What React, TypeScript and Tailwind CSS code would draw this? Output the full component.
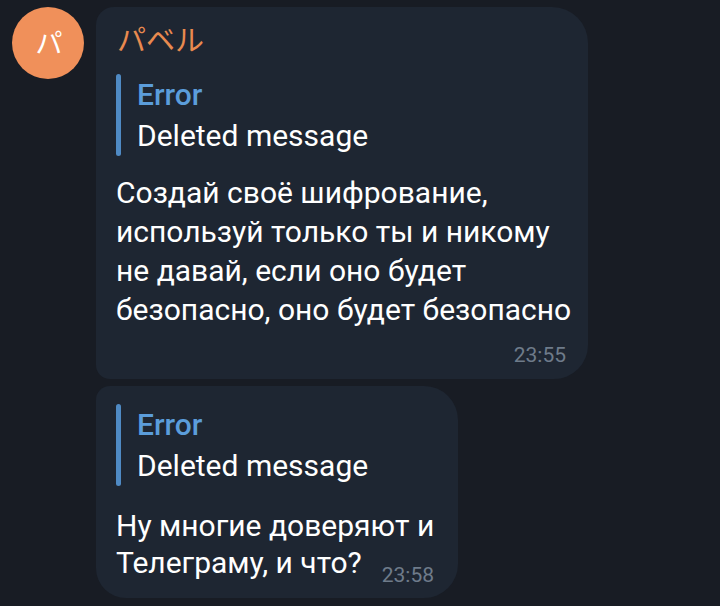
const roboto = { fontFamily: 'Roboto, "Noto Sans CJK JP", sans-serif' };

function Quote() {
  return (
    <div className="flex">
      <div className="w-[5px] rounded-full bg-[#4f8ac4]" />
      <div className="pl-[16px] whitespace-nowrap">
        <div className="text-[30px] leading-[41px] font-medium text-[#5b9ddb]">Error</div>
        <div className="text-[30px] leading-[41px] text-white">Deleted message</div>
      </div>
    </div>
  );
}

const lines = [
  'Создай своё шифрование,',
  'используй только ты и никому',
  'не давай, если оно будет',
  'безопасно, оно будет безопасно',
];

export default function App() {
  return (
    <div className="w-[720px] h-[606px] bg-[#181c24] overflow-hidden flex" style={roboto}>
      {/* avatar */}
      <div className="pl-[12px] pt-[7px] w-[96px] shrink-0">
        <div
          className="w-[72px] h-[72px] rounded-full bg-[#f0905a] flex items-center justify-center text-white text-[27px] leading-none pb-[3px] pl-[2px]"
          style={{ fontFamily: '"Noto Sans CJK JP", sans-serif' }}
        >
          パ
        </div>
      </div>

      <div className="flex flex-col gap-[7px] pt-[7px]">
        {/* first bubble */}
        <div className="w-[492px] bg-[#1e2632] rounded-tl-[18px] rounded-tr-[36px] rounded-br-[34px] rounded-bl-[14px] pl-[20px] pr-[20px] pt-[13px] pb-[12px]">
          <div
            className="text-[29px] leading-[36px] text-[#e98a4f] pl-px"
            style={{ fontFamily: '"Noto Sans CJK JP", sans-serif' }}
          >
            パベル
          </div>
          <div className="mt-[18px]">
            <Quote />
          </div>
          <div className="mt-[17px] text-[30px] leading-[39px] text-white whitespace-nowrap">
            {lines.map((l) => (
              <div key={l}>{l}</div>
            ))}
          </div>
          <div className="mt-[14px] pr-[2px] flex justify-end text-[21px] leading-[24px] text-[#6e7b8a]">23:55</div>
        </div>

        {/* second bubble */}
        <div className="w-[362px] bg-[#1e2632] rounded-tl-[14px] rounded-tr-[34px] rounded-br-[34px] rounded-bl-[30px] pl-[20px] pr-[24px] pt-[18px] pb-[17px]">
          <Quote />
          <div className="mt-[21px] text-[30px] leading-[37px] text-white whitespace-nowrap">
            <div>Ну многие доверяют и</div>
            <div className="flex items-end justify-between">
              <span>Телеграму, и что?</span>
              <span className="text-[21px] leading-[12px] text-[#6e7b8a]">23:58</span>
            </div>
          </div>
        </div>
      </div>
    </div>
  );
}
